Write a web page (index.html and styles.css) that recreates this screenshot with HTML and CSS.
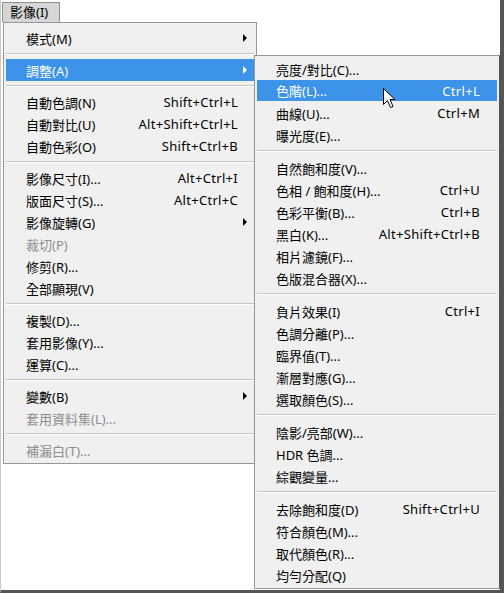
FILE: index.html
```html
<!DOCTYPE html>
<html lang="zh-Hant">
<head>
    <meta charset="UTF-8">
    <title>影像選單</title>
    <link rel="stylesheet" href="styles.css">
</head>
<body>
    <div class="frame">
        <div class="menubar">
            <span class="menu-title">影像(I)</span>
        </div>

        <!-- main image menu -->
        <ul class="menu main-menu">
            <li class="item has-sub"><span class="label">模式(M)</span></li>
            <li class="sep"></li>
            <li class="item has-sub active"><span class="label">調整(A)</span></li>
            <li class="sep"></li>
            <li class="item"><span class="label">自動色調(N)</span><span class="key">Shift+Ctrl+L</span></li>
            <li class="item"><span class="label">自動對比(U)</span><span class="key">Alt+Shift+Ctrl+L</span></li>
            <li class="item"><span class="label">自動色彩(O)</span><span class="key">Shift+Ctrl+B</span></li>
            <li class="sep"></li>
            <li class="item"><span class="label">影像尺寸(I)...</span><span class="key">Alt+Ctrl+I</span></li>
            <li class="item"><span class="label">版面尺寸(S)...</span><span class="key">Alt+Ctrl+C</span></li>
            <li class="item has-sub"><span class="label">影像旋轉(G)</span></li>
            <li class="item disabled"><span class="label">裁切(P)</span></li>
            <li class="item"><span class="label">修剪(R)...</span></li>
            <li class="item"><span class="label">全部顯現(V)</span></li>
            <li class="sep"></li>
            <li class="item"><span class="label">複製(D)...</span></li>
            <li class="item"><span class="label">套用影像(Y)...</span></li>
            <li class="item"><span class="label">運算(C)...</span></li>
            <li class="sep"></li>
            <li class="item has-sub"><span class="label">變數(B)</span></li>
            <li class="item disabled"><span class="label">套用資料集(L)...</span></li>
            <li class="sep"></li>
            <li class="item disabled"><span class="label">補漏白(T)...</span></li>
        </ul>

        <!-- adjustments submenu -->
        <ul class="menu sub-menu">
            <li class="item"><span class="label">亮度/對比(C)...</span></li>
            <li class="item active"><span class="label">色階(L)...</span><span class="key">Ctrl+L</span></li>
            <li class="item"><span class="label">曲線(U)...</span><span class="key">Ctrl+M</span></li>
            <li class="item"><span class="label">曝光度(E)...</span></li>
            <li class="sep"></li>
            <li class="item"><span class="label">自然飽和度(V)...</span></li>
            <li class="item"><span class="label">色相 / 飽和度(H)...</span><span class="key">Ctrl+U</span></li>
            <li class="item"><span class="label">色彩平衡(B)...</span><span class="key">Ctrl+B</span></li>
            <li class="item"><span class="label">黑白(K)...</span><span class="key">Alt+Shift+Ctrl+B</span></li>
            <li class="item"><span class="label">相片濾鏡(F)...</span></li>
            <li class="item"><span class="label">色版混合器(X)...</span></li>
            <li class="sep"></li>
            <li class="item"><span class="label">負片效果(I)</span><span class="key">Ctrl+I</span></li>
            <li class="item"><span class="label">色調分離(P)...</span></li>
            <li class="item"><span class="label">臨界值(T)...</span></li>
            <li class="item"><span class="label">漸層對應(G)...</span></li>
            <li class="item"><span class="label">選取顏色(S)...</span></li>
            <li class="sep"></li>
            <li class="item"><span class="label">陰影/亮部(W)...</span></li>
            <li class="item"><span class="label">HDR 色調...</span></li>
            <li class="item"><span class="label">綜觀變量...</span></li>
            <li class="sep"></li>
            <li class="item"><span class="label">去除飽和度(D)</span><span class="key">Shift+Ctrl+U</span></li>
            <li class="item"><span class="label">符合顏色(M)...</span></li>
            <li class="item"><span class="label">取代顏色(R)...</span></li>
            <li class="item"><span class="label">均勻分配(Q)</span></li>
        </ul>

        <svg class="cursor" width="13" height="21" viewBox="0 0 13 21">
            <path d="M0.5 0.5 L0.5 16.5 L4.5 12.5 L7.5 19.5 L10 18.5 L7 11.5 L12 11.5 Z" fill="#fff" stroke="#000" stroke-width="1"/>
        </svg>
    </div>
</body>
</html>
```

FILE: styles.css
```css
body {
    margin: 0;
    background-color: #fff;
    font-family: "Noto Sans", "Noto Sans CJK TC", sans-serif;
    font-size: 13px;
    color: #000;
}
.frame {
    position: relative;
    width: 499px;
    height: 590px;
    background-color: #fff;
    border-left: 1px solid #c8c8c8;
    border-right: 4px solid #555;
    border-bottom: 3px solid #555;
}
.menubar {
    padding: 2px 0 0 1px;
    height: 20px;
}
.menu-title {
    display: inline-block;
    height: 19px;
    line-height: 18px;
    padding: 0 11px 0 7px;
    background-color: #d6d6d6;
    border: 1px solid #8f8f8f;
    border-bottom: none;
}
.menu {
    list-style: none;
    margin: 0;
    background-color: #f0f0f0;
    border: 1px solid #979797;
}
.main-menu {
    margin-left: 2px;
    width: 252px;
    padding: 4px 0 2px;
}
.sub-menu {
    position: absolute;
    left: 253px;
    top: 55px;
    width: 244px;
    padding: 2px 0;
    border-right-color: #555;
}
.item {
    position: relative;
    display: flex;
    align-items: center;
    height: 22px;
    margin: 0 2px;
    padding: 0 16px 0 20px;
    white-space: nowrap;
}
.sub-menu .item {
    padding: 0 17px 0 19px;
}
.label {
    flex: 1;
}
.key {
    text-align: right;
    letter-spacing: 0.3px;
}
.active {
    background-color: #3c93e8;
    color: #fff;
}
.sub-menu .active {
    height: 21px;
    margin-bottom: 1px;
}
.disabled {
    color: #8d8d8d;
}
.has-sub::after {
    content: "";
    position: absolute;
    right: 7px;
    top: 7px;
    border-left: 4px solid #000;
    border-top: 4px solid transparent;
    border-bottom: 4px solid transparent;
}
.has-sub.active::after {
    border-left-color: #fff;
}
.sep {
    height: 10px;
    margin: 0 2px;
    position: relative;
}
.sub-menu .sep {
    height: 11px;
}
.sep::before {
    content: "";
    position: absolute;
    left: 0;
    right: 0;
    top: 4px;
    height: 1px;
    background-color: #c5c5c5;
    border-bottom: 1px solid #fff;
}
.cursor {
    position: absolute;
    left: 382px;
    top: 88px;
}
```
